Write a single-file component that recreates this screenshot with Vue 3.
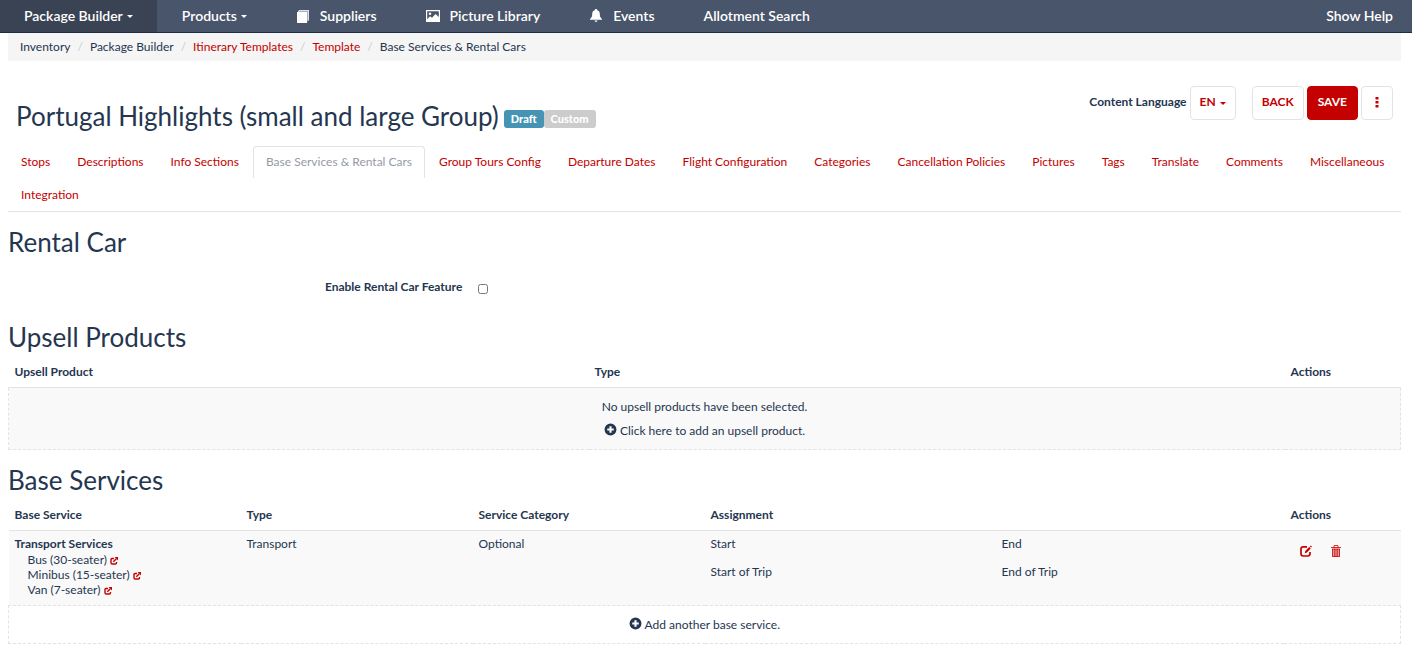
<script setup>
import { ref } from 'vue'

const navItems = [
  { label: 'Package Builder', caret: true, active: true },
  { label: 'Products', caret: true },
  { label: 'Suppliers', icon: 'book' },
  { label: 'Picture Library', icon: 'picture' },
  { label: 'Events', icon: 'bell' },
  { label: 'Allotment Search' },
]

const crumbs = [
  { label: 'Inventory' },
  { label: 'Package Builder' },
  { label: 'Itinerary Templates', link: true },
  { label: 'Template', link: true },
  { label: 'Base Services & Rental Cars' },
]

const tabs = [
  'Stops', 'Descriptions', 'Info Sections', 'Base Services & Rental Cars',
  'Group Tours Config', 'Departure Dates', 'Flight Configuration', 'Categories',
  'Cancellation Policies', 'Pictures', 'Tags', 'Translate', 'Comments',
  'Miscellaneous', 'Integration',
]
const activeTab = ref('Base Services & Rental Cars')
const rentalCar = ref(false)
const vehicles = ['Bus (30-seater)', 'Minibus (15-seater)', 'Van (7-seater)']
</script>

<template>
  <div class="page">
    <nav class="topbar" aria-label="Main">
      <a v-for="item in navItems" :key="item.label" href="#" class="nav-item" :class="{ active: item.active }">
        <svg v-if="item.icon === 'book'" class="nav-icon" viewBox="0 0 14 14" aria-hidden="true">
          <path fill="#aab1bd" d="M3 1h10v10.500h-1.500V13H11V3H2V2h1z" />
          <path fill="#dfe2e7" d="M2 2.200 3.200 1H13v1H3.500L3 3H2zM12 2h1v9.500h-1z" />
          <path fill="#fff" d="M1 3h10v11H1z" />
        </svg>
        <svg v-else-if="item.icon === 'picture'" class="nav-icon" viewBox="0 0 14 14" aria-hidden="true">
          <path fill="#fff" fill-rule="evenodd" d="M0 1h14v12H0zM1.200 2.200v8l2.800-3 2 1.500L9.500 5l3.300 3V2.200z" />
          <circle cx="4" cy="4.700" r="1.300" fill="#fff" />
        </svg>
        <svg v-else-if="item.icon === 'bell'" class="nav-icon" viewBox="0 0 14 14" aria-hidden="true">
          <path fill="#fff" d="M7 0c.8 0 1.200.5 1.200 1.200C10 1.800 10.800 3 10.800 5c0 2.500.7 3.800 2.200 5v.8H1V10c1.500-1.200 2.200-2.500 2.200-5 0-2 .8-3.200 2.600-3.800C5.800.5 6.200 0 7 0zM5.500 11.600h3C8.300 12.500 7.800 13 7 13s-1.300-.5-1.500-1.400z" />
        </svg>
        <span>{{ item.label }}</span>
        <i v-if="item.caret" class="caret"></i>
      </a>
      <a href="#" class="nav-item help">Show Help</a>
    </nav>

    <main class="content">
      <ol class="breadcrumb">
        <li v-for="crumb in crumbs" :key="crumb.label">
          <a v-if="crumb.link" href="#">{{ crumb.label }}</a>
          <span v-else>{{ crumb.label }}</span>
        </li>
      </ol>

      <header class="heading">
        <h1>Portugal Highlights (small and large Group)</h1>
        <div class="badges"><span class="badge draft">Draft</span><span class="badge">Custom</span></div>
        <div class="toolbar">
          <span id="language-label" class="language">Content Language</span>
          <button type="button" class="btn lang" aria-describedby="language-label">EN<i class="caret"></i></button>
          <button type="button" class="btn">BACK</button>
          <button type="button" class="btn primary">SAVE</button>
          <button type="button" class="btn more" aria-label="More actions">
            <svg width="4" height="12" viewBox="0 0 4 12" aria-hidden="true">
              <path fill="currentColor" d="M.5 1h3v2.600h-3zM.5 5h3v2.600h-3zM.5 9h3v2.600h-3z" />
            </svg>
          </button>
        </div>
      </header>

      <nav class="tabs" aria-label="Template sections">
        <a v-for="tab in tabs" :key="tab" href="#" class="tab" :class="{ current: tab === activeTab }" @click.prevent="activeTab = tab">{{ tab }}</a>
      </nav>

      <section>
        <h2>Rental Car</h2>
        <div class="form-row">
          <label for="rental-car">Enable Rental Car Feature</label>
          <input id="rental-car" v-model="rentalCar" type="checkbox" />
        </div>
      </section>

      <section>
        <h2>Upsell Products</h2>
        <table>
          <colgroup><col class="c5" /><col class="c6" /><col class="c1" /></colgroup>
          <thead><tr><th>Upsell Product</th><th>Type</th><th>Actions</th></tr></thead>
          <tbody>
            <tr>
              <td colspan="3" class="boxed shaded">
                <p>No upsell products have been selected.</p>
                <button type="button" class="add">
                  <svg class="plus" viewBox="0 0 12 12" aria-hidden="true"><path fill="currentColor" fill-rule="evenodd" d="M6 .5a5.500 5.500 0 1 1 0 11 5.500 5.500 0 0 1 0-11zM5 3v2H3v2h2v2h2V7h2V5H7V3z" /></svg>
                  Click here to add an upsell product.
                </button>
              </td>
            </tr>
          </tbody>
        </table>
      </section>

      <section>
        <h2>Base Services</h2>
        <table>
          <colgroup><col class="c2" /><col class="c2" /><col class="c2" /><col class="c5" /><col class="c1" /></colgroup>
          <thead>
            <tr><th>Base Service</th><th>Type</th><th>Service Category</th><th>Assignment</th><th>Actions</th></tr>
          </thead>
          <tbody>
            <tr class="service">
              <td>
                <strong>Transport Services</strong>
                <ul>
                  <li v-for="vehicle in vehicles" :key="vehicle">
                    {{ vehicle }}
                    <a href="#" :aria-label="'Open ' + vehicle">
                      <svg class="open" viewBox="0 0 8 8" aria-hidden="true">
                        <path fill="none" stroke="currentColor" stroke-width="1.400" d="M4 1.500H2.200Q1 1.500 1 2.700v3.100Q1 7 2.200 7h3.100Q6.500 7 6.500 5.800V5M3.300 4.800 6.300 1.800" />
                        <path fill="currentColor" d="M4.600 0H8v3.500z" />
                      </svg>
                    </a>
                  </li>
                </ul>
              </td>
              <td>Transport</td>
              <td>Optional</td>
              <td>
                <dl>
                  <div><dt>Start</dt><dd>Start of Trip</dd></div>
                  <div><dt>End</dt><dd>End of Trip</dd></div>
                </dl>
              </td>
              <td>
                <div class="actions">
                  <button type="button" aria-label="Edit">
                    <svg viewBox="0 0 12 12" aria-hidden="true">
                      <path fill="none" stroke="currentColor" stroke-width="1.700" d="M7 1.900H3.200Q1 1.900 1 4v4.800Q1 11 3.200 11h4.600Q10 11 10 8.800V7" />
                      <path fill="currentColor" d="M4.700 8.200 5.300 6l3.900-4 1.600 1.600-3.900 4zM9.800 1.300l.9-.9L12 1.700l-.9.900z" />
                    </svg>
                  </button>
                  <button type="button" aria-label="Delete">
                    <svg viewBox="0 0 12 12" aria-hidden="true">
                      <path fill="currentColor" fill-opacity=".25" d="M2 4h8v8H2z" />
                      <path fill="none" stroke="currentColor" stroke-width=".8" d="M1 2.500h10M4 2.500V.6h4v1.900M2 4h8M2.500 4v7.500h7V4M4.300 4v7.500M6 4v7.500M7.700 4v7.500" />
                    </svg>
                  </button>
                </div>
              </td>
            </tr>
            <tr>
              <td colspan="5" class="boxed">
                <button type="button" class="add">
                  <svg class="plus" viewBox="0 0 12 12" aria-hidden="true"><path fill="currentColor" fill-rule="evenodd" d="M6 .5a5.500 5.500 0 1 1 0 11 5.500 5.500 0 0 1 0-11zM5 3v2H3v2h2v2h2V7h2V5H7V3z" /></svg>
                  Add another base service.
                </button>
              </td>
            </tr>
          </tbody>
        </table>
      </section>
    </main>
  </div>
</template>

<style>
body { margin: 0; background: #fff; }
</style>

<style scoped>
* { box-sizing: border-box; }
.page {
  color: #253650;
  font-family: Lato, "Open Sans", sans-serif;
  font-size: 12px;
  line-height: 16px;
}
a { color: #c40000; text-decoration: none; }
button { font: inherit; color: inherit; cursor: pointer; }
h1, h2 { margin: 0; font-size: 26px; font-weight: 400; line-height: 30px; }
h2 { margin-bottom: 1px; }

.topbar { display: flex; gap: 1px; height: 33px; background: #49556a; border-bottom: 1px solid #1f2c44; }
.nav-item { display: flex; align-items: center; padding: 0 24px 1px; color: #fff; font-size: 14px; font-weight: 600; white-space: nowrap; }
.nav-item.active { background: #3a4353; }
.nav-item.help { margin-left: auto; padding-right: 19px; }
.nav-icon { width: 14px; height: 14px; margin-right: 10px; }
.caret { margin: 2px 0 0 4px; border: 3px solid transparent; border-top-color: currentColor; border-bottom: 0; }

.content { padding: 0 11px 0 8px; }
.breadcrumb { display: flex; margin: 0; padding: 6px 12px; list-style: none; background: #f5f5f5; }
.breadcrumb li + li::before { content: "/"; padding: 0 7px; color: #ccc; }

.heading { display: flex; align-items: flex-start; padding: 25px 8px 15px; }
.heading h1 { padding-top: 15px; }
.badges { display: flex; margin: 24px 0 0 5px; }
.badge { padding: 0 7px; border-radius: 3px; background: #ccc; color: #fff; font-size: 11px; font-weight: 900; line-height: 18px; }
.badge.draft { background: #4694b4; }
.toolbar { display: flex; align-items: center; gap: 3px; margin-left: auto; font-weight: 700; }
.btn { height: 34px; padding: 0 9px 2px; border: 1px solid #e3e3e3; border-radius: 4px; background: #fff; color: #c40000; }
.language { padding-bottom: 2px; }
.btn.lang { display: flex; align-items: center; margin-right: 13px; }
.btn.primary { padding: 0 10px 2px; border-color: #c40000; background: #c40000; color: #fff; }
.btn.more { display: flex; align-items: center; justify-content: center; width: 32px; padding: 0 0 2px; }

.tabs { display: flex; flex-wrap: wrap; gap: 1px; border-bottom: 1px solid #e3e3e3; }
.tab { padding: 7px 12px 8px; border: 1px solid transparent; border-bottom: 0; border-radius: 4px 4px 0 0; }
.tab.current { border-color: #e3e3e3; color: #959ba5; }

section { padding-top: 15px; }
.form-row { display: flex; align-items: center; padding: 21px 0 12px; }
.form-row label { width: calc(100% / 3 - 10px); text-align: right; font-weight: 700; }
.form-row input { width: 10px; height: 10px; margin: 3px 0 0 16px; }

table { width: 100%; table-layout: fixed; border-collapse: collapse; }
.c1 { width: 8.333%; }
.c2 { width: 16.667%; }
.c5 { width: 41.667%; }
.c6 { width: 50%; }
th { padding: 11px 6px 7px; border-bottom: 1px solid #e3e3e3; text-align: left; font-weight: 700; }
td { padding: 5px 6px 8px; vertical-align: top; }
.service { background: #f9f9f9; }
.boxed { padding: 11px 6px 10px; border: 1px dashed #e3e3e3; text-align: center; }
.shaded { background: #f9f9f9; border-top-style: solid; }
.boxed p { margin: 0 0 8px; }
.add { padding: 0; border: 0; background: none; }
.plus { width: 13px; height: 13px; vertical-align: -1px; }
ul { margin: 0; padding: 0 0 0 13px; list-style: none; line-height: 15px; }
.open { width: 8px; height: 8px; vertical-align: -1px; }
dl { display: grid; grid-template-columns: 1fr 1fr; gap: 14px; margin: 0; }
dd { margin: 12px 0 0; }
.actions { display: flex; gap: 18px; padding: 9px 10px 0; }
.actions button { display: flex; padding: 0; border: 0; background: none; color: #c40000; }
.actions svg { width: 12px; height: 12px; }
</style>
